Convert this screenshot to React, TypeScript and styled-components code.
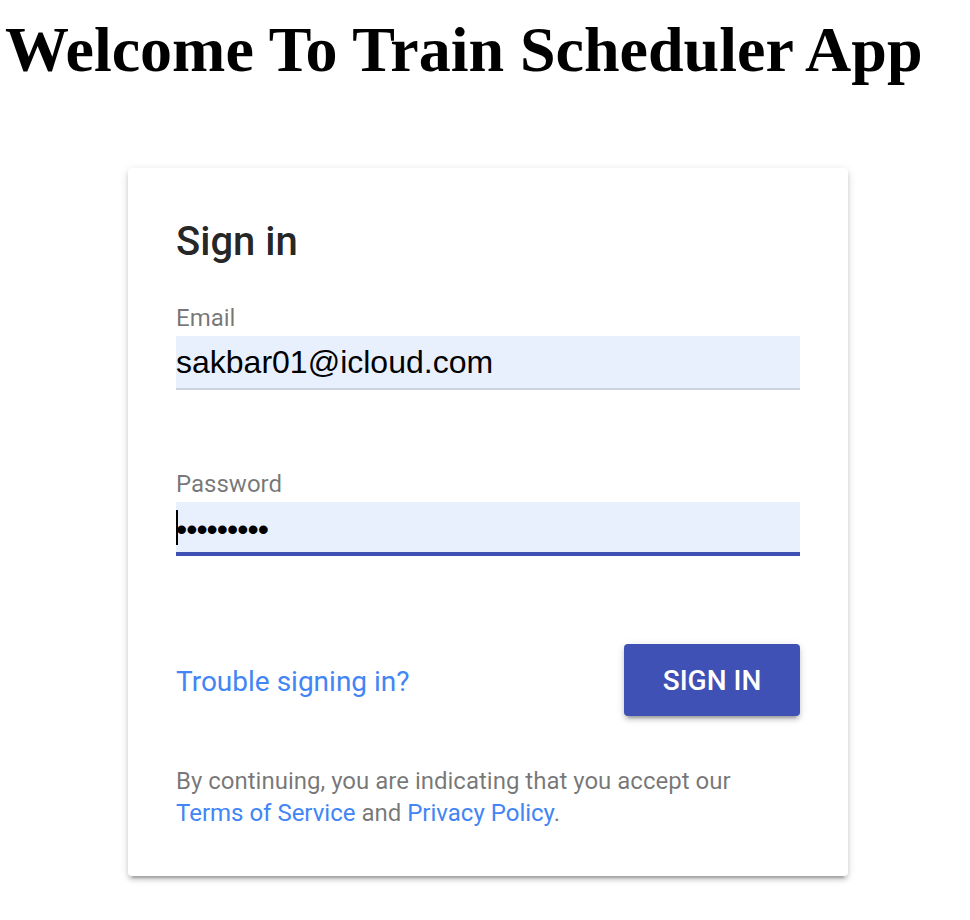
import React from "react";
import styled, { createGlobalStyle } from "styled-components";

const GlobalStyle = createGlobalStyle`
  html, body {
    margin: 0;
    padding: 0;
    background: #ffffff;
  }
  body {
    font-family: "Liberation Serif", "Times New Roman", serif;
  }
`;

const Page = styled.div`
  display: flex;
  flex-direction: column;
  width: 970px;
  min-height: 920px;
`;

const Heading = styled.h1`
  margin: 14px 0 0 5px;
  font-family: "Liberation Serif", "Times New Roman", serif;
  font-weight: 700;
  font-size: 64px;
  line-height: 72px;
  color: #000;
  white-space: nowrap;
`;

const Card = styled.div`
  margin: 82px 0 0 128px;
  width: 720px;
  box-sizing: border-box;
  padding: 50px 48px 47px;
  background: #fff;
  border-radius: 4px;
  box-shadow: 0 4px 4px 0 rgba(0, 0, 0, 0.14), 0 6px 2px -4px rgba(0, 0, 0, 0.2),
    0 2px 10px 0 rgba(0, 0, 0, 0.12);
  font-family: Roboto, "Liberation Sans", Arial, sans-serif;
  display: flex;
  flex-direction: column;
`;

const Title = styled.h2`
  margin: 0;
  font-size: 40px;
  line-height: 48px;
  font-weight: 500;
  color: rgba(0, 0, 0, 0.87);
`;

const Field = styled.div<{ $gap: number }>`
  display: flex;
  flex-direction: column;
  margin-top: ${(p) => p.$gap}px;
  position: relative;
`;

const Label = styled.label`
  font-size: 24px;
  line-height: 32px;
  color: rgba(0, 0, 0, 0.54);
  margin-bottom: 2px;
`;

const Input = styled.input<{ $focused?: boolean }>`
  display: block;
  width: 100%;
  box-sizing: content-box;
  height: ${(p) => (p.$focused ? 45 : 52)}px;
  margin: 0;
  padding: ${(p) => (p.$focused ? "5px 0 0" : "0")};
  border: none;
  border-bottom: ${(p) => (p.$focused ? "4px solid #3f51b5" : "2px solid #ccd3df")};
  background: #e8f0fe;
  font-family: "Liberation Sans", Arial, Helvetica, sans-serif;
  font-size: 32px;
  letter-spacing: ${(p) => (p.$focused ? "-1px" : "0")};
  color: #000;
  outline: none;
`;

const Caret = styled.span`
  position: absolute;
  left: 0;
  top: 42px;
  width: 2px;
  height: 35px;
  background: #000;
`;

const Actions = styled.div`
  margin-top: 88px;
  display: flex;
  align-items: center;
  justify-content: space-between;
`;

const Link = styled.a`
  color: #4285f4;
  text-decoration: none;
  cursor: pointer;
`;

const TroubleLink = styled(Link)`
  font-size: 28px;
  line-height: 40px;
  padding-top: 3px;
`;

const SignInButton = styled.button`
  width: 176px;
  height: 72px;
  border: none;
  border-radius: 4px;
  background: #3f51b5;
  color: #fff;
  font-family: Roboto, "Liberation Sans", Arial, sans-serif;
  font-weight: 500;
  font-size: 28px;
  text-transform: uppercase;
  padding: 0;
  box-shadow: 0 4px 4px 0 rgba(0, 0, 0, 0.14), 0 6px 2px -4px rgba(0, 0, 0, 0.2),
    0 2px 10px 0 rgba(0, 0, 0, 0.12);
  cursor: pointer;
`;

const Terms = styled.p`
  margin: 49px 0 0;
  font-size: 24px;
  line-height: 32px;
  color: rgba(0, 0, 0, 0.54);
`;

export default function App() {
  return (
    <Page>
      <GlobalStyle />
      <Heading>Welcome To Train Scheduler App</Heading>
      <Card>
        <Title>Sign in</Title>
        <Field $gap={36}>
          <Label htmlFor="email">Email</Label>
          <Input id="email" type="email" value="sakbar01@icloud.com" readOnly />
        </Field>
        <Field $gap={78}>
          <Label htmlFor="password">Password</Label>
          <Input id="password" type="password" value="123456789" readOnly $focused />
          <Caret />
        </Field>
        <Actions>
          <TroubleLink>Trouble signing in?</TroubleLink>
          <SignInButton type="button">Sign In</SignInButton>
        </Actions>
        <Terms>
          By continuing, you are indicating that you accept our <Link>Terms of Service</Link> and{" "}
          <Link>Privacy Policy</Link>.
        </Terms>
      </Card>
    </Page>
  );
}
